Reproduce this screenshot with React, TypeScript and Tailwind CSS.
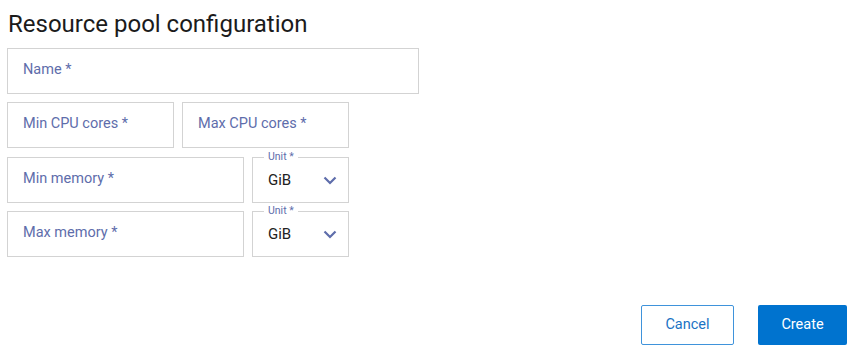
import React from "react";

const labelColor = "text-[#5e6dab]";

function TextField({ label, className }: { label: string; className: string }) {
  return (
    <div className={`flex h-[46px] items-center border border-[#d3d3d3] bg-white pl-[15px] pb-[3px] ${className}`}>
      <span className={`text-[14.5px] ${labelColor}`}>{label}</span>
    </div>
  );
}

function UnitSelect() {
  return (
    <div className="relative flex h-[46px] w-[97px] items-center justify-between border border-[#d3d3d3] bg-white pl-[15px] pr-[11px] pt-[1px]">
      <span className="absolute left-[11px] top-[-7px] bg-white px-[4px] text-[10.5px] leading-[12px] text-[#5e6dab]">Unit *</span>
      <span className="text-[15px] text-[#222]">GiB</span>
      <svg width="14" height="9" viewBox="0 0 14 9" fill="none">
        <path d="M1.5 1.5 L7 7 L12.5 1.5" stroke="#5e6dab" strokeWidth="2.2" />
      </svg>
    </div>
  );
}

export default function App() {
  return (
    <div className="h-[359px] w-[861px] bg-white font-['Roboto',sans-serif]">
      <div className="flex flex-col px-[7px] pt-[8px]">
        <h1 className="mb-[7px] pl-[1px] text-[24px] leading-[33px] text-[#1b1b1b]">Resource pool configuration</h1>
        <div className="flex flex-col gap-[8px]">
          <TextField label="Name *" className="w-[412px]" />
          <div className="flex gap-[8px]">
            <TextField label="Min CPU cores *" className="w-[167px]" />
            <TextField label="Max CPU cores *" className="w-[167px]" />
          </div>
          <div className="mt-[1px] flex gap-[8px]">
            <TextField label="Min memory *" className="w-[237px]" />
            <UnitSelect />
          </div>
          <div className="flex gap-[8px]">
            <TextField label="Max memory *" className="w-[237px]" />
            <UnitSelect />
          </div>
        </div>
      </div>
      <div className="mt-[48px] flex justify-end gap-[24px] pr-[14px]">
        <button className="h-[40px] w-[93px] rounded-[2px] border border-[#3f93db] bg-white text-[14.5px] text-[#1a73c4]">Cancel</button>
        <button className="h-[40px] w-[89px] rounded-[2px] bg-[#0073cf] text-[14.5px] text-white">Create</button>
      </div>
    </div>
  );
}
